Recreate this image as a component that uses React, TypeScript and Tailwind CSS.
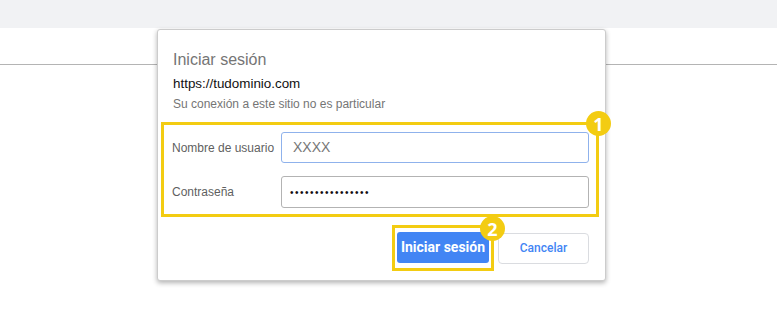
import React from 'react';

const Badge: React.FC<{ n: string; className: string }> = ({ n, className }) => (
    <div className={`absolute w-[25px] h-[25px] rounded-full bg-[#f3cc12] flex items-center justify-center text-white text-[18px] font-bold leading-none font-['Open_Sans',sans-serif] ${className}`}>
        {n}
    </div>
);

const App: React.FC = () => {
    return (
        <div className="relative w-[777px] h-[332px] bg-white overflow-hidden font-['Liberation_Sans',Arial,sans-serif]">
            <div className="h-[28px] bg-[#f1f2f4]" />
            <div className="mt-[36px] h-px bg-[#b4b4b4]" />

            <div className="absolute left-[157px] top-[29px] w-[449px] h-[252px] bg-white border border-[#cccccc] rounded-[3px] shadow-[0_2px_5px_rgba(0,0,0,0.3)] flex flex-col">
                <div className="px-[15px] pt-[20px]">
                    <div className="text-[16px] leading-[20px] text-[#757575]">Iniciar sesión</div>
                    <div className="mt-[6px] text-[13.4px] leading-[16px] text-[#111]">https://tudominio.com</div>
                    <div className="mt-[5px] text-[12px] leading-[15px] text-[#757575]">Su conexión a este sitio no es particular</div>
                </div>

                <div className="relative mt-[10px] ml-[3px] mr-[6px] border-[3px] border-[#f3cc12] pt-[7px] pb-[6px] pl-[8px] pr-[7px] flex flex-col gap-[13px]">
                    <div className="flex items-center">
                        <span className="w-[109px] text-[12px] text-[#5f5f5f]">Nombre de usuario</span>
                        <div className="flex-1 h-[31px] border border-[#8fb2ec] rounded-[3px] flex items-center pl-[11px] text-[14px] text-[#777]">
                            XXXX
                        </div>
                    </div>
                    <div className="flex items-center">
                        <span className="w-[109px] text-[12px] text-[#5f5f5f]">Contraseña</span>
                        <div className="flex-1 h-[32px] border border-[#b3b3b3] rounded-[3px] flex items-center pl-[8px] text-[10px] tracking-[1.5px] text-[#111]">
                            ••••••••••••••••
                        </div>
                    </div>
                    <Badge n="1" className="top-[-14px] right-[-15px]" />
                </div>

                <div className="mt-[8px] pr-[16px] flex justify-end items-center gap-[4px]">
                    <div className="relative border-[3px] border-[#f3cc12] px-[2px] pt-[4px] pb-[5px]">
                        <button className="w-[92px] h-[31px] rounded-[3px] bg-[#4285f4] text-white text-[14px] font-bold font-['Roboto',sans-serif]">
                            Iniciar sesión
                        </button>
                        <Badge n="2" className="top-[-12px] right-[-14px]" />
                    </div>
                    <button className="w-[91px] h-[31px] rounded-[4px] bg-white border border-[#dadce0] text-[#4285f4] text-[12px] font-medium font-['Roboto',sans-serif]">
                        Cancelar
                    </button>
                </div>
            </div>
        </div>
    );
};

export default App;
